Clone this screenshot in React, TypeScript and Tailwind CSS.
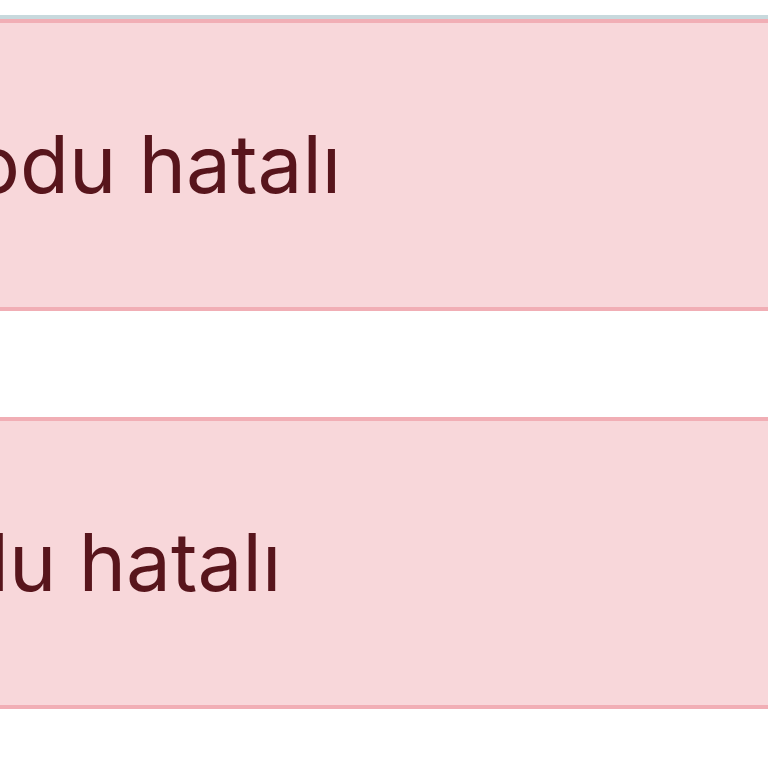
export default function App() {
  const font = { fontFamily: 'Inter, "Noto Sans", sans-serif' };
  return (
    <div className="w-[768px] h-[768px] overflow-hidden bg-white flex flex-col" style={font}>
      <div className="h-[15px] shrink-0 bg-white" />
      <div className="h-[4px] shrink-0 bg-[#c8d9dd]" />
      <div className="h-[292px] shrink-0 -mx-[20px] border-[4px] border-[#f1aeb5] bg-[#f8d7da] flex items-center overflow-hidden">
        <span className="-ml-[12px] whitespace-nowrap text-[80px] leading-none text-[#58151c] pb-[2px]">odu hatalı</span>
      </div>
      <div className="h-[106px] shrink-0 bg-white" />
      <div className="h-[292px] shrink-0 -mx-[20px] border-[4px] border-[#f1aeb5] bg-[#f8d7da] flex items-center overflow-hidden">
        <span className="-ml-[24px] whitespace-nowrap text-[80px] leading-none text-[#58151c] pb-[2px]">du hatalı</span>
      </div>
      <div className="flex-1 bg-white" />
    </div>
  );
}
